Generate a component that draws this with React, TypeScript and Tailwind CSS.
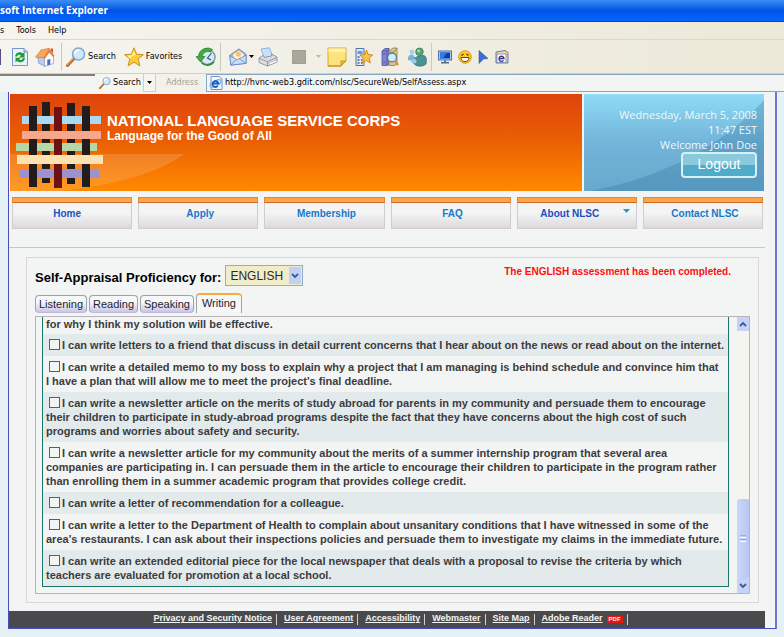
import React, { useState } from "react";

const navItems = [
  { label: "Home", style: "text-[#1a4fc0] pr-2.5" },
  { label: "Apply", style: "text-[#1878c8] pl-1" },
  { label: "Membership", style: "text-[#1878c8] pl-1" },
  { label: "FAQ", style: "text-[#1878c8] pl-1" },
  { label: "About NLSC", style: "text-[#1a4fc0] pr-3.5", menu: true },
  { label: "Contact NLSC", style: "text-[#1878c8] pl-1" },
];

const tabs = ["Listening", "Reading", "Speaking", "Writing"];

const statements = [
  "I can write letters to a friend that discuss in detail current concerns that I hear about on the news or read about on the internet.",
  "I can write a detailed memo to my boss to explain why a project that I am managing is behind schedule and convince him that I\u00a0have a plan that will allow me to meet the project's final deadline.",
  "I can write a newsletter article on the merits of study abroad for parents in my community and persuade them to encourage their children to participate in study-abroad programs despite the fact that they have concerns about the high cost of such programs and worries about safety and security.",
  "I can write a newsletter article for my community about the merits of a summer internship program that several area companies are participating in. I can persuade them in the article to encourage their children to participate in the program rather than enrolling them in a summer academic program that provides college credit.",
  "I can write a letter of recommendation for a colleague.",
  "I can write a letter to the Department of Health to complain about unsanitary conditions that I have witnessed in some of the area's restaurants. I can ask about their inspections policies and persuade them to investigate my claims in the immediate future.",
  "I can write an extended editorial piece for the local newspaper that deals with a proposal to revise the criteria by which teachers are evaluated for promotion at a local school.",
];

const footerLinks = [
  "Privacy and Security Notice",
  "User Agreement",
  "Accessibility",
  "Webmaster",
  "Site Map",
  "Adobe Reader",
];

function Magnifier({ className }: { className: string }) {
  return (
    <svg viewBox="0 0 20 20" className={className}>
      <path d="M1.5 18.5 L8 11.5" stroke="#b5642c" strokeWidth="3" strokeLinecap="round" />
      <path d="M1.5 17.5 L7 11.5" stroke="#eba565" strokeWidth="1.2" strokeLinecap="round" />
      <circle cx="12.5" cy="7" r="6" fill="#cfe9fa" stroke="#7fa6cf" strokeWidth="1.5" />
      <path d="M8.8 6.5 A4 4 0 0 1 13 3.2" stroke="#fff" strokeWidth="1.8" fill="none" />
    </svg>
  );
}

function RefreshIcon() {
  return (
    <svg viewBox="0 0 18 20" className="h-5 w-[18px]">
      <path d="M1.5 1.5 H13 L16.5 5 V18.5 H1.5 Z" fill="#e9f2fd" stroke="#7696cf" />
      <path d="M13 1.5 V5 H16.5" fill="#b6cdf0" stroke="#7696cf" />
      <path d="M4 9.5 C4.5 5 9.5 4 12 6.5 L13.5 5 V10.5 H8 L10 8.6 C8.5 7.3 6.5 7.8 6 9.5 Z" fill="#239a36" />
      <path d="M14 11 C13.5 15.5 8.5 16.5 6 14 L4.5 15.5 V10.8 H10 L8 12.3 C9.5 13.5 11.5 13 12 11 Z" fill="#239a36" />
    </svg>
  );
}

function HomeIcon() {
  return (
    <svg viewBox="0 0 20 20" className="h-5 w-5">
      <path d="M3 9.5 L9.5 10 L10 19.3 L3.5 16 Z" fill="#b9cdee" stroke="#7e9aca" strokeWidth=".8" />
      <path d="M9.5 10.5 V19.3 L18.5 16.5 V9 L14.5 5 Z" fill="#f8fbff" stroke="#8ba5ce" strokeWidth=".8" />
      <path d="M.6 10 L6 3 L14.5 1.2 L9 10.8 L5 10.5 L3 11 Z" fill="#f7a75c" stroke="#d97b34" strokeWidth=".7" />
      <path d="M14 1.2 L19.5 8.8 L18 10 L14.2 5.5 L9.8 12 L8.5 11 Z" fill="#e38148" />
      <path d="M12.3 12.8 L15.3 12 V17.5 L12.3 18.5 Z" fill="#4f6db3" />
      <path d="M15.8 1.5 H18 V6.5 L15.8 3.5 Z" fill="#c95636" />
    </svg>
  );
}

function StarIcon() {
  return (
    <svg viewBox="0 0 20 20" className="h-5 w-5">
      <path d="M10 .8 L12.6 7.2 L19.4 7.7 L14.2 12 L15.9 18.9 L10 15.2 L4.1 18.9 L5.8 12 L.6 7.7 L7.4 7.2 Z" fill="#fccc3d" stroke="#cf8f17" />
      <path d="M10 3 L11.5 8.2 L8 9 L6 12 L3 8.6 L8 8.2 Z" fill="#fff0a3" />
    </svg>
  );
}

function HistoryIcon() {
  return (
    <svg viewBox="0 0 20 20" className="h-5 w-5">
      <circle cx="11.5" cy="10" r="7.5" fill="#d9eaf4" stroke="#7d9fb5" strokeWidth="1.6" />
      <path d="M16.5 2.5 A9 9 0 0 0 2.5 9.5 H0 L4.5 15 L9 9.5 H6 A6 6 0 0 1 14.5 5 Z" fill="#3fae3c" stroke="#1e7b27" strokeWidth=".7" />
      <path d="M5.5 15.5 A8 8 0 0 0 18 14.5" fill="none" stroke="#368b42" strokeWidth="1.8" />
      <path d="M15.5 6 L11.5 11 L15 13" fill="none" stroke="#31558a" strokeWidth="1.2" />
    </svg>
  );
}

function MailIcon() {
  return (
    <svg viewBox="0 0 20 20" className="h-5 w-[18px]">
      <path d="M1 8 L11 1 L19 7 V17 L2 19 Z" fill="#9dbdec" stroke="#5d83c0" />
      <path d="M4 7 L11 2.5 L17 7 L15.5 12 L9.5 14 L5 11.5 Z" fill="#fdf3dc" stroke="#dfa659" strokeWidth=".8" />
      <circle cx="10.5" cy="7" r="2.8" fill="#f8c272" />
      <path d="M1 8.5 L9 13 L19 8 V17 L2 19 Z" fill="#c8ddf8" stroke="#5d83c0" strokeWidth=".8" />
      <path d="M2 19 L8 12.8 M19 17 L11.5 12" stroke="#5d83c0" strokeWidth=".8" />
    </svg>
  );
}

function PrinterIcon() {
  return (
    <svg viewBox="0 0 20 20" className="h-5 w-5">
      <path d="M3 2 L11.5 .8 L14.5 9 L6.5 11 Z" fill="#c8e2fb" stroke="#7da4d2" strokeWidth=".8" />
      <path d="M1 11 L5 8.5 L6.5 10.5 L14 8.8 L13.7 7 L19 10 V15 L9.5 19 L1 15.5 Z" fill="#dcdee2" stroke="#85888f" strokeWidth=".8" />
      <path d="M1 11.5 L9.5 14.5 L19 10.5 M9.5 14.5 V19" stroke="#85888f" strokeWidth=".8" fill="none" />
      <path d="M10.5 16 L18 13 L19.5 14.5 L12 18 Z" fill="#fff" stroke="#999" strokeWidth=".6" />
    </svg>
  );
}

function NoteIcon() {
  return (
    <svg viewBox="0 0 20 20" className="h-5 w-5">
      <path d="M1 1 H19 V14 L14 19 H1 Z" fill="#fde37c" stroke="#d9a92c" />
      <path d="M1.5 1.5 H18.5 V5 H1.5 Z" fill="#fff2ae" />
      <path d="M14 19 V14 H19 Z" fill="#eebc3e" stroke="#b98a18" strokeWidth=".8" />
      <path d="M1 19 H14" stroke="#b98a18" />
    </svg>
  );
}

function StarPageIcon() {
  return (
    <svg viewBox="0 0 18 20" className="h-5 w-[18px]">
      <path d="M1 1.5 H9 V18.5 H1 Z" fill="#d8e7fb" stroke="#5473a8" />
      <path d="M2.5 4 H7.5 V7 H2.5 Z" fill="#6c99de" />
      <path d="M2.5 10 H4.5 M2.5 13 H4.5 M2.5 16 H4.5 M6 13 H7.5 M6 16 H7.5" stroke="#4e6594" strokeWidth="1.4" />
      <path d="M11.5 3 L13.2 7.5 L17.8 8 L14.3 11 L15.3 16 L11.5 13.5 L7.3 16 L8.3 11 L5 8 L9.8 7.5 Z" fill="#fdc33c" stroke="#c9780f" strokeWidth=".8" />
    </svg>
  );
}

function BooksIcon() {
  return (
    <svg viewBox="0 0 18 20" className="h-5 w-[18px]">
      <path d="M1 4 L4 1.5 H8 V17 L6 18.5 H1 Z" fill="#8286d0" stroke="#4e529c" strokeWidth=".8" />
      <path d="M1 4 H6 V18.5 M6 4 L8 1.5 M2 7 H5 M2 15 H5" fill="none" stroke="#4e529c" strokeWidth=".8" />
      <path d="M8 4 L12 1 H16 V16 L14 18.5 H8 Z" fill="#d9c690" stroke="#8e7a46" strokeWidth=".8" />
      <path d="M9 5 H13 M13 5 L16 1" stroke="#8e7a46" strokeWidth=".8" />
      <circle cx="11" cy="10.5" r="4.4" fill="#d0ebfb" stroke="#52749f" strokeWidth="1.1" />
      <path d="M14 14 L17 18" stroke="#e08a35" strokeWidth="2.2" />
    </svg>
  );
}

function PeopleIcon() {
  return (
    <svg viewBox="0 0 20 20" className="h-5 w-5">
      <circle cx="5" cy="5" r="2.5" fill="#9ed5ef" />
      <path d="M.8 13 C.8 8 3 7.5 6 7.8 L9 12 L6 14 Z" fill="#78b5dd" />
      <circle cx="12.5" cy="4.8" r="3.8" fill="#58a872" stroke="#2b7054" strokeWidth=".7" />
      <path d="M5 15 C5 11.5 9 11 11 9 L17 8.5 C20 10 19.5 14 19 17 C15 20 10 19.5 8 17.5 Z" fill="#4a9494" stroke="#2a6379" strokeWidth=".7" />
      <path d="M4 13.5 C6 10.5 10 12 9.5 15 C8 17.5 5 17 4 13.5 Z" fill="#9ccbea" />
      <circle cx="11.5" cy="4" r="1.4" fill="#a8dfac" />
    </svg>
  );
}

function MonitorIcon() {
  return (
    <svg viewBox="0 0 14 14" className="h-3.5 w-3.5">
      <rect x=".5" y="1" width="13" height="9" fill="#a9c8ee" stroke="#53749f" />
      <rect x="2" y="2.5" width="10" height="6" fill="#0c3fae" />
      <path d="M2 2.5 H9 L5 8.5 H2 Z" fill="#2b7ee8" />
      <path d="M6 10.5 H8 V12 H11 V13.5 H3 V12 H6 Z" fill="#4f6a90" />
    </svg>
  );
}

function SmileIcon() {
  return (
    <svg viewBox="0 0 14 14" className="h-3.5 w-3.5">
      <circle cx="7" cy="7" r="6.3" fill="#ffc928" stroke="#d58c00" strokeWidth=".8" />
      <path d="M3 7.5 H11 C11 13 3 13 3 7.5 Z" fill="#fff" stroke="#5c3c00" strokeWidth=".9" />
      <path d="M3.5 5.5 L5.5 4 M8.5 4 L10.5 5.5" stroke="#5c3c00" strokeWidth="1.2" />
    </svg>
  );
}

function IeIcon() {
  return (
    <svg viewBox="0 0 14 14" className="h-3.5 w-3.5 shrink-0">
      <path d="M2 .5 H10 L13 3 V13.5 H2 Z" fill="#f4f8ff" stroke="#7a8fc0" />
      <ellipse cx="6.5" cy="7.5" rx="6" ry="2.6" fill="none" stroke="#5fb6ec" strokeWidth="1.2" transform="rotate(-28 6.5 7.5)" />
      <path d="M3.5 7.5 H9.5 A3 3 0 1 0 8.8 10" fill="none" stroke="#1a61c4" strokeWidth="1.8" />
    </svg>
  );
}

function Caret({ color }: { color: string }) {
  return (
    <svg viewBox="0 0 5 3" className="h-[3px] w-[5px]">
      <path d="M0 0h5L2.5 3z" fill={color} />
    </svg>
  );
}

function WeaveLogo() {
  return (
    <svg viewBox="0 0 87 87" className="h-[87px] w-[87px]">
      <g fill="#231c1d">
        <rect x="13" y="5" width="8" height="81" />
        <rect x="26" y="1" width="8" height="81" />
        <rect x="51" y="2" width="8" height="81" />
        <rect x="66" y="5" width="8" height="81" />
      </g>
      <rect x="38" y="6" width="8" height="81" fill="#6d1214" />
      <rect x="6" y="30" width="79" height="8" fill="#f6a78c" />
      <rect x="1" y="54" width="86" height="9" fill="#fbe2b0" />
      <path d="M6 15h7v8H6z M21 15h17v8H21z M46 15h20v8H46z M74 15h11v8H74z" fill="#a9daf2" />
      <path d="M0 42h13v8H0z M21 42h17v8H21z M46 42h20v8H46z M74 42h7v8h-7z" fill="#b5d8a6" />
      <path d="M3 68h10v9H3z M21 68h17v9H21z M46 68h20v9H46z M74 68h9v9h-9z" fill="#9b92cf" />
    </svg>
  );
}

function Separator() {
  return <div className="h-7 w-px bg-[#cdc9b8]" />;
}

function BrowserChrome() {
  return (
    <header className="font-['DejaVu_Sans_Condensed','DejaVu_Sans',sans-serif] text-[9px] text-black">
      <div className="flex h-[22px] items-center border-b border-[#0a3fc4] bg-linear-to-b from-[#3a8df5] via-[#0453e4] to-[#0066ff] font-['Open_Sans',sans-serif] text-[10px] font-bold text-white">
        soft Internet Explorer
      </div>
      <div className="bg-linear-to-r from-[#f5f4ef] to-[#ece9d8]">
        <nav className="flex h-[18px] items-center gap-3 border-b border-[#dcd7c6]">
          <button>s</button>
          <button>Tools</button>
          <button>Help</button>
        </nav>
        <div className="flex h-[34px] items-center border-b border-[#d5d0be]">
          <div className="h-4 w-px bg-[#5b4a86]" />
          <div className="ml-2.5 flex items-center gap-1.5">
            <button aria-label="Refresh"><RefreshIcon /></button>
            <button aria-label="Home"><HomeIcon /></button>
            <Separator />
          </div>
          <button className="ml-1 flex items-center gap-0.5">
            <Magnifier className="h-5 w-5" />
            Search
          </button>
          <button className="ml-2 flex items-center gap-0.5">
            <StarIcon />
            Favorites
          </button>
          <button aria-label="History" className="ml-3.5"><HistoryIcon /></button>
          <div className="ml-1"><Separator /></div>
          <button aria-label="Mail" className="ml-2 flex items-center gap-0.5">
            <MailIcon />
            <Caret color="#000" />
          </button>
          <button aria-label="Print" className="ml-1"><PrinterIcon /></button>
          <button aria-label="Edit" className="ml-3.5 flex items-center gap-2.5">
            <span className="h-3.5 w-3.5 border border-[#a19e92] bg-[#aaa79b]" />
            <Caret color="#bbb7a8" />
          </button>
          <div className="ml-1.5 flex items-center gap-2">
            <button aria-label="Note"><NoteIcon /></button>
            <button aria-label="Links"><StarPageIcon /></button>
            <button aria-label="Research"><BooksIcon /></button>
            <button aria-label="Messenger"><PeopleIcon /></button>
          </div>
          <div className="ml-1"><Separator /></div>
          <div className="ml-1.5 flex items-center gap-1.5">
            <button aria-label="Desktop"><MonitorIcon /></button>
            <button aria-label="Smileys"><SmileIcon /></button>
            <button aria-label="Pointer">
              <svg viewBox="0 0 10 13" className="h-3.5 w-2.5"><path d="M1 0 L10 8 L5.5 8.5 L1 13 Z" fill="#3b6fd8" stroke="#24459c" strokeWidth=".5" /></svg>
            </button>
            <button aria-label="Encyclopedia">
              <svg viewBox="0 0 14 14" className="h-3.5 w-4">
                <path d="M1 2 L10 .5 L13 2.5 V13 H1 Z" fill="#f3d897" stroke="#647ab8" />
                <rect x="2" y="4" width="9" height="8.5" fill="#fff" stroke="#647ab8" strokeWidth=".7" />
                <path d="M4 8.5 H9 A2.5 2.5 0 1 0 8.5 10.3" fill="none" stroke="#3c2f8e" strokeWidth="1.3" />
              </svg>
            </button>
          </div>
        </div>
        <div className="flex h-[18px] items-stretch">
          <div className="w-[95px] border-t-2 border-[#848078] bg-[#f3f5f4]" />
          <button className="ml-0.5 flex w-[47px] items-center gap-0.5 border-r border-[#d5d0be] bg-[#f5f4ef] pl-0.5">
            <Magnifier className="h-3 w-3" />
            Search
          </button>
          <button aria-label="Search options" className="flex w-3 items-center justify-center border-r border-b border-[#d5d0be] bg-[#f5f4ef]">
            <Caret color="#000" />
          </button>
          <label htmlFor="address" className="ml-2.5 flex w-10 items-center text-[#a5a293]">
            Address
          </label>
          <div className="flex flex-1 items-center gap-0.5 border border-r-0 border-[#8aa6bf] bg-[#f3f5f4] pl-0.5">
            <IeIcon />
            <input
              id="address"
              type="text"
              className="w-full bg-transparent outline-none"
              defaultValue="http://hvnc-web3.gdit.com/nlsc/SecureWeb/SelfAssess.aspx"
            />
          </div>
        </div>
      </div>
    </header>
  );
}

function Banner() {
  return (
    <div className="flex h-[97px] gap-0.5">
      <div className="relative flex-1 bg-linear-to-b from-[#de430c] via-[#ea6004] to-[#ff8a00]">
        <svg viewBox="0 0 572 97" preserveAspectRatio="none" className="absolute inset-0 h-full w-full">
          <path d="M0 60 H174 C150 78 110 90 50 97 H0 Z" fill="#fff" fillOpacity=".14" />
        </svg>
        <div className="relative flex gap-1 pt-[7px] pl-1.5">
          <WeaveLogo />
          <div className="pt-[11px] font-bold text-white">
            <h1 className="text-[15px] leading-[17px]">NATIONAL LANGUAGE SERVICE CORPS</h1>
            <p className="text-xs leading-[14px]">Language for the Good of All</p>
          </div>
        </div>
      </div>
      <div className="relative w-[180px] bg-linear-to-b from-[#8fdaf6] via-[#72b5d9] to-[#68a8cd]">
        <svg viewBox="0 0 180 97" preserveAspectRatio="none" className="absolute inset-0 h-full w-full">
          <path d="M5 97 C80 84 140 50 180 6 V97 Z" fill="#276a98" fillOpacity=".26" />
        </svg>
        <div className="relative flex flex-col items-end pt-[13px] pr-[7px] font-['Open_Sans',sans-serif] text-[11px] leading-[15px] text-[#eef8fb]">
          <span>Wednesday, March 5, 2008</span>
          <span>11:47 EST</span>
          <span>Welcome John Doe</span>
          <button className="h-[26px] w-[76px] rounded border-2 border-[#d5f1f4] bg-linear-to-b from-[#8bc9dc] from-50% to-[#50abc9] to-50% pb-0.5 font-['Liberation_Sans',sans-serif] text-sm leading-none text-white">
            Logout
          </button>
        </div>
      </div>
    </div>
  );
}

function App() {
  const [tab, setTab] = useState("Writing");

  return (
    <div className="bg-[#e4f2f5] pb-2 font-['Liberation_Sans',Arial,sans-serif]">
      <BrowserChrome />
      <div className="mr-[7px] ml-2 border border-t-0 border-r-2 border-[#4a4cc0] border-r-[#7474cc] bg-[#f3f5f4] pt-0.5 pr-2.5">
        <div className="pr-px pl-px">
          <Banner />
        </div>

        <nav className="flex gap-1.5 pt-1.5 pr-0.5 pl-[3px]">
          {navItems.map((item) => (
            <a
              key={item.label}
              href="#"
              className="relative h-8 flex-1 border border-t-0 border-[#cfcdd2] bg-linear-to-b from-[#f3f5f4] from-50% to-[#dcd9de] text-center text-[10px] font-bold"
            >
              <span className="-mx-px block h-1.5 border border-[#e5882f] border-b-[#d2691c] bg-[#fba54c]" />
              <span className={`block leading-[21px] ${item.style}`}>{item.label}</span>
              {item.menu && (
                <svg viewBox="0 0 7 4" className="absolute top-3 right-1.5 h-1 w-[7px]">
                  <path d="M0 0h7L3.5 4z" fill="#3a8ccb" />
                </svg>
              )}
            </a>
          ))}
        </nav>

        <hr className="mt-[18px] border-[#c9c3cc]" />

        <main className="mt-[9px] mr-1.5 ml-[17px] border border-[#ddd5d9] px-2 pt-1.5 pb-2">
          <div className="flex justify-between">
            <div className="flex items-center gap-1">
              <label htmlFor="language" className="pt-1 text-[13px] font-bold text-black">
                Self-Appraisal Proficiency for:
              </label>
              <div className="relative">
                <select
                  id="language"
                  className="block h-[21px] w-[78px] appearance-none border border-[#93abc7] bg-[#f1ecc9] pl-1 text-xs text-[#2c2c1c]"
                >
                  <option>ENGLISH</option>
                </select>
                <span className="pointer-events-none absolute top-0.5 right-0.5 flex h-[17px] w-3 items-center justify-center bg-[#c0d0f6]">
                  <svg viewBox="0 0 8 6" className="h-1.5 w-2"><path d="M1 1l3 3 3-3" fill="none" stroke="#435a8d" strokeWidth="1.8" /></svg>
                </span>
              </div>
            </div>
            <p className="pt-px pr-[19px] text-[10px] leading-[14px] font-bold text-[#fb1010]">
              The ENGLISH assessment has been completed.
            </p>
          </div>

          <div className="mt-[5px] flex h-[23px] items-end gap-0.5 pb-[3px]">
            {tabs.map((name) => (
              <button
                key={name}
                onClick={() => setTab(name)}
                className={
                  name === tab
                    ? "h-5 rounded-t-sm border border-t-2 border-b-0 border-[#98a5ae] border-t-[#fbab3a] bg-[#f6f7f8] px-[5px] text-[11px] text-[#241c34]"
                    : "h-[18px] rounded-sm border border-[#98a5ae] border-b-[#bdb8d8] bg-linear-to-b from-[#f6f7f8] from-40% to-[#c9c5e4] px-[3px] text-[11px] leading-4 text-[#241c34]"
                }
              >
                {name}
              </button>
            ))}
          </div>

          <div className="flex border border-[#b9b5b7]">
            <div className="flex-1 pb-1.5 pl-1.5">
              <ul className="border border-t-0 border-[#1d7468] text-[11px] leading-[14px] font-bold text-[#3c3c3e]">
                <li className="px-[3px] pb-[3px]">for why I think my solution will be effective.</li>
                {statements.map((text) => (
                  <li key={text} className="px-[3px] py-1 odd:bg-[#f3f5f4] even:bg-[#e3eaeb]">
                    <label>
                      <input
                        type="checkbox"
                        className="mr-0.5 ml-[3px] inline-block h-[11px] w-[11px] appearance-none border border-[#3a6594] bg-[#f3f5f4] align-[-1px] checked:bg-[#3a6594]"
                      />
                      {text}
                    </label>
                  </li>
                ))}
              </ul>
            </div>
            <div className="ml-2 flex w-3 flex-col bg-[#f5f4ee]">
              <button aria-label="Scroll up" className="flex h-3.5 items-center justify-center bg-[#c5d3f8]">
                <svg viewBox="0 0 8 6" className="h-1.5 w-2"><path d="M1 5l3-3 3 3" fill="none" stroke="#435a8d" strokeWidth="1.8" /></svg>
              </button>
              <div className="flex flex-1 flex-col justify-end">
                <div className="flex h-20 flex-col items-center justify-center gap-px rounded-xs bg-linear-to-r from-[#c9d8f8] to-[#b9c5f0]">
                  <span className="h-px w-1.5 bg-[#8fb0e8]" />
                  <span className="h-px w-1.5 bg-white" />
                  <span className="h-px w-1.5 bg-[#8fb0e8]" />
                  <span className="h-px w-1.5 bg-white" />
                </div>
              </div>
              <button aria-label="Scroll down" className="flex h-3.5 items-center justify-center bg-[#c5d3f8]">
                <svg viewBox="0 0 8 6" className="h-1.5 w-2"><path d="M1 1l3 3 3-3" fill="none" stroke="#435a8d" strokeWidth="1.8" /></svg>
              </button>
            </div>
          </div>
        </main>

        <footer className="mt-2 flex h-[17px] items-center justify-center bg-[#4a4a4c] text-[9px] font-bold text-[#f3f5f4]">
          {footerLinks.map((link) => (
            <span key={link} className="flex items-center">
              <a href="#" className="pr-1 pl-[7px] underline">
                {link}
              </a>
              {link === "Adobe Reader" && (
                <span className="mr-1 bg-[#e01818] px-0.5 text-[6px] leading-[7px]">PDF</span>
              )}
              <span className="h-[11px] w-px bg-[#d0d0d0]" />
            </span>
          ))}
        </footer>
      </div>
    </div>
  );
}

export default App;
